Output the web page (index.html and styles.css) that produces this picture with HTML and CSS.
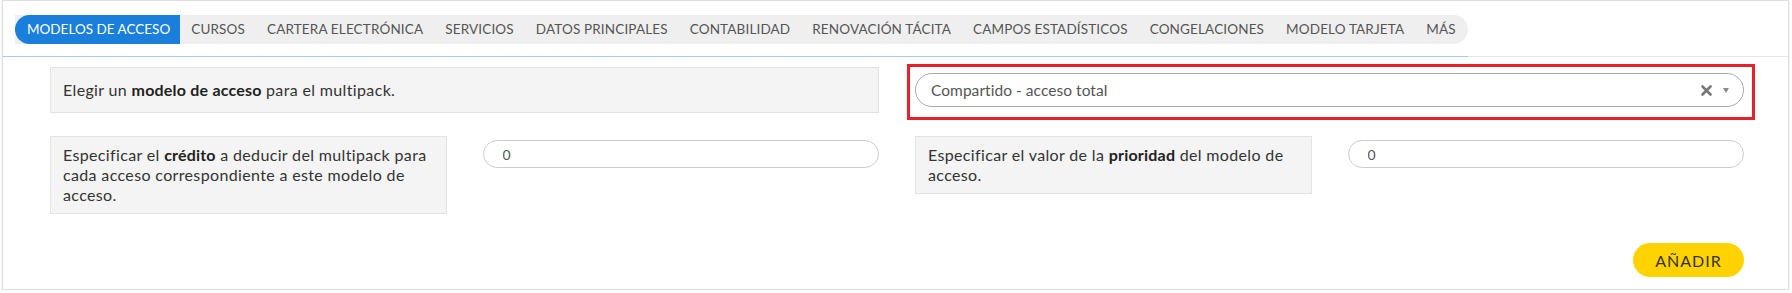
FILE: index.html
```html
<!doctype html>
<html lang="es">
<head>
  <meta charset="UTF-8">
  <meta name="viewport" content="width=device-width, initial-scale=1.0">
  <title>Multipack - modelos de acceso</title>
  <link rel="stylesheet" href="styles.css">
</head>
<body>
<div class="card">
  <div class="tabs-line">
    <div class="tabs-wrap">
      <ul class="tabs">
        <li class="active">Modelos de acceso</li>
        <li>Cursos</li>
        <li>Cartera electrónica</li>
        <li>Servicios</li>
        <li>Datos principales</li>
        <li>Contabilidad</li>
        <li>Renovación tácita</li>
        <li>Campos estadísticos</li>
        <li>Congelaciones</li>
        <li>Modelo tarjeta</li>
        <li>Más</li>
      </ul>
    </div>
  </div>
  <form class="form" action="javascript:void(0)">
    <div class="label label-first span-2">Elegir un <b>modelo de acceso</b> para el multipack.</div>
    <div class="select-cell span-2">
      <div class="select">
        <span class="select-value">Compartido - acceso total</span>
        <svg class="select-clear" width="11" height="11" viewBox="0 0 11 11">
          <path d="M1.5 1.5 L9.5 9.5 M9.5 1.5 L1.5 9.5" stroke="#777" stroke-width="2.6" stroke-linecap="round"/>
        </svg>
        <span class="select-arrow"></span>
      </div>
      <div class="highlight"></div>
    </div>

    <div class="label">Especificar el <b>crédito</b> a deducir del multipack para cada acceso correspondiente a este modelo de acceso.</div>
    <input class="input" type="text" value="0">
    <div class="label">Especificar el valor de la <b>prioridad</b> del modelo de acceso.</div>
    <input class="input" type="text" value="0">

    <div class="actions">
      <button type="button" class="btn-add">Añadir</button>
    </div>
  </form>
</div>
</body>
</html>
```

FILE: styles.css
```css
html, body { margin: 0; padding: 0; background: #fff; }
* { box-sizing: border-box; font-family: Lato, "Open Sans", sans-serif; }

.card { margin-left: 2px; width: 1787px; border: 1px solid #dedede; box-shadow: 0 2px 2px rgba(0,0,0,.13); background: #fff; }

.tabs-line { display: flex; border-bottom: 1px solid #e6e6e6; }
.tabs-wrap { padding: 14px 0 12px 12px; border-bottom: 1px solid #a7caeb; margin-bottom: -1px; }
.tabs { display: flex; list-style: none; margin: 0; padding: 0 1px 0 0; background: #efefef; border-radius: 0 15px 15px 0; }
.tabs li { padding: 0 11px; line-height: 29px; height: 29px; font-size: 13.5px; letter-spacing: .15px; text-transform: uppercase; color: #555; white-space: nowrap; }
.tabs li.active { background: #1a7edb; color: #fff; border-radius: 15px 0 0 15px; padding: 0 10px 0 12px; letter-spacing: 0; }

.form { display: grid; grid-template-columns: repeat(4, 1fr); column-gap: 36px; row-gap: 23px; align-items: start; padding: 10px 44px 12px 47px; margin: 0; }
.span-2 { grid-column: span 2; }

.label { background: #f4f4f4; border: 1px solid #e3e3e3; padding: 8px 12px; font-size: 16px; letter-spacing: .35px; line-height: 20px; color: #333; }
.label b { font-weight: 700; color: #222; letter-spacing: .2px; }
.label-first { padding: 12px 12px; align-self: center; }

.select-cell { position: relative; align-self: center; }
.select { display: flex; align-items: center; height: 34px; border: 1px solid #aaa; border-radius: 17px; padding: 0 14px 0 15px; font-size: 15.5px; letter-spacing: .05px; color: #555; }
.select-value { flex: 1; }
.select-clear { margin-right: 11px; }
.select-arrow { width: 0; height: 0; border-left: 3px solid transparent; border-right: 3px solid transparent; border-top: 5px solid #888; }
.highlight { position: absolute; left: -8px; right: -11px; top: -9px; bottom: -13px; border: 3px solid #e6212b; pointer-events: none; }

.input { display: block; width: 100%; margin-top: 4px; height: 28px; border: 1px solid #ccc; border-radius: 14px; padding: 0 19px; font-size: 14px; color: #555; background: #fff; outline: none; }

.actions { grid-column: 1 / 5; display: flex; justify-content: flex-end; margin-top: 6px; }
.btn-add { width: 111px; height: 34px; border: 0; border-radius: 17px; background: #ffd200; color: #333; font-size: 16px; letter-spacing: 1px; text-transform: uppercase; cursor: pointer; }
```
